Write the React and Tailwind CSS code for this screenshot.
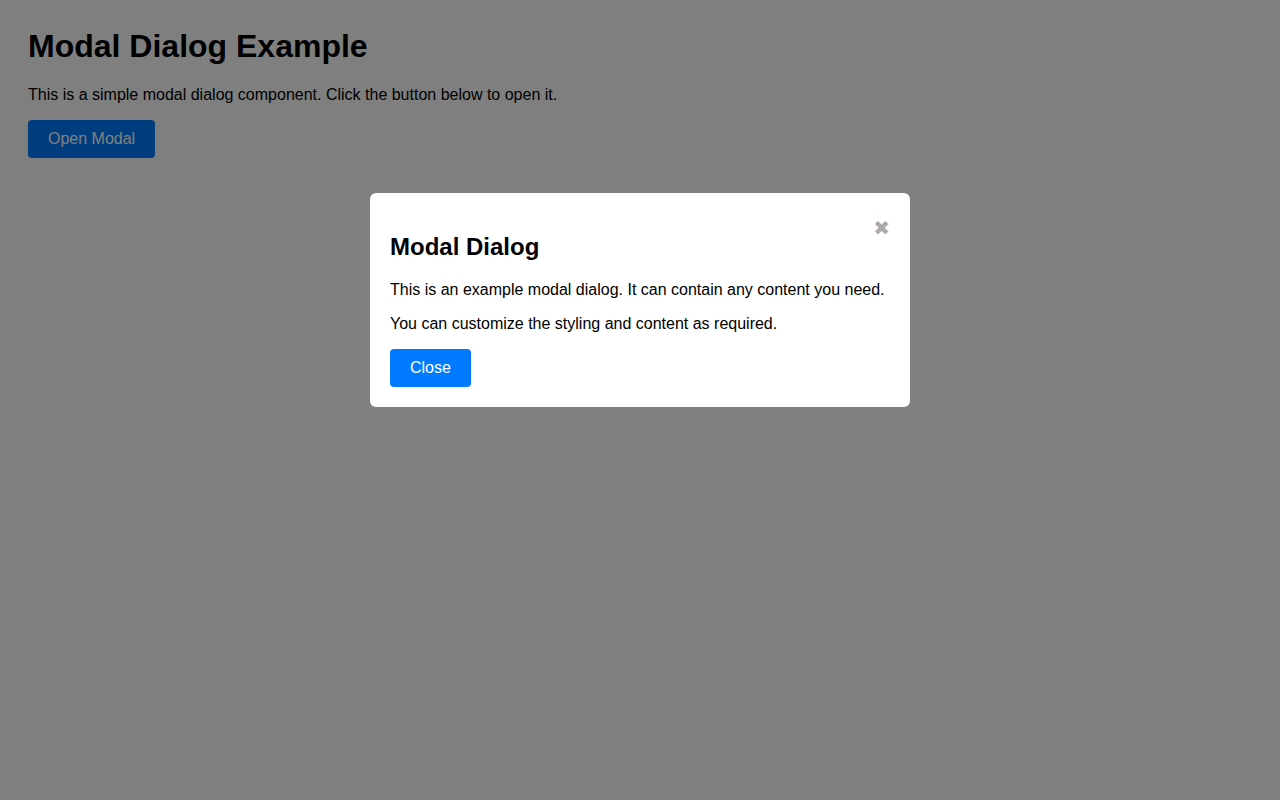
import { useState } from "react";

const App = () => {
  const [open, setOpen] = useState(true);

  return (
    <div className="min-h-screen bg-white p-[28px] font-['Liberation_Sans',Arial,sans-serif] text-black">
      <h1 className="mb-[21px] text-[32px] leading-[37px] font-bold">
        Modal Dialog Example
      </h1>

      <p className="mb-[16px] text-[16px] leading-[18px]">
        This is a simple modal dialog component. Click the button below to open it.
      </p>

      <button
        onClick={() => setOpen(true)}
        className="rounded-[4px] bg-[#007bff] px-[20px] py-[10px] text-[16px] leading-[18px] text-white"
      >
        Open Modal
      </button>

      {/* Overlay */}

      {open && (
        <div className="fixed inset-0 z-50 bg-black/50">
          <div className="mx-auto mt-[193px] w-[540px] rounded-[6px] bg-white p-[20px]">
            <button
              onClick={() => setOpen(false)}
              className="float-right mt-[2px] font-['DejaVu_Sans',sans-serif] text-[20px] leading-[26px] text-[#aaa]"
            >
              ✖
            </button>

            <h2 className="mt-[20px] mb-[20px] text-[24px] leading-[28px] font-bold">
              Modal Dialog
            </h2>

            <p className="mb-[16px] text-[16px] leading-[18px]">
              This is an example modal dialog. It can contain any content you need.
            </p>

            <p className="mb-[16px] text-[16px] leading-[18px]">
              You can customize the styling and content as required.
            </p>

            <button
              onClick={() => setOpen(false)}
              className="rounded-[4px] bg-[#007bff] px-[20px] py-[10px] text-[16px] leading-[18px] text-white"
            >
              Close
            </button>
          </div>
        </div>
      )}
    </div>
  );
};

export default App;
